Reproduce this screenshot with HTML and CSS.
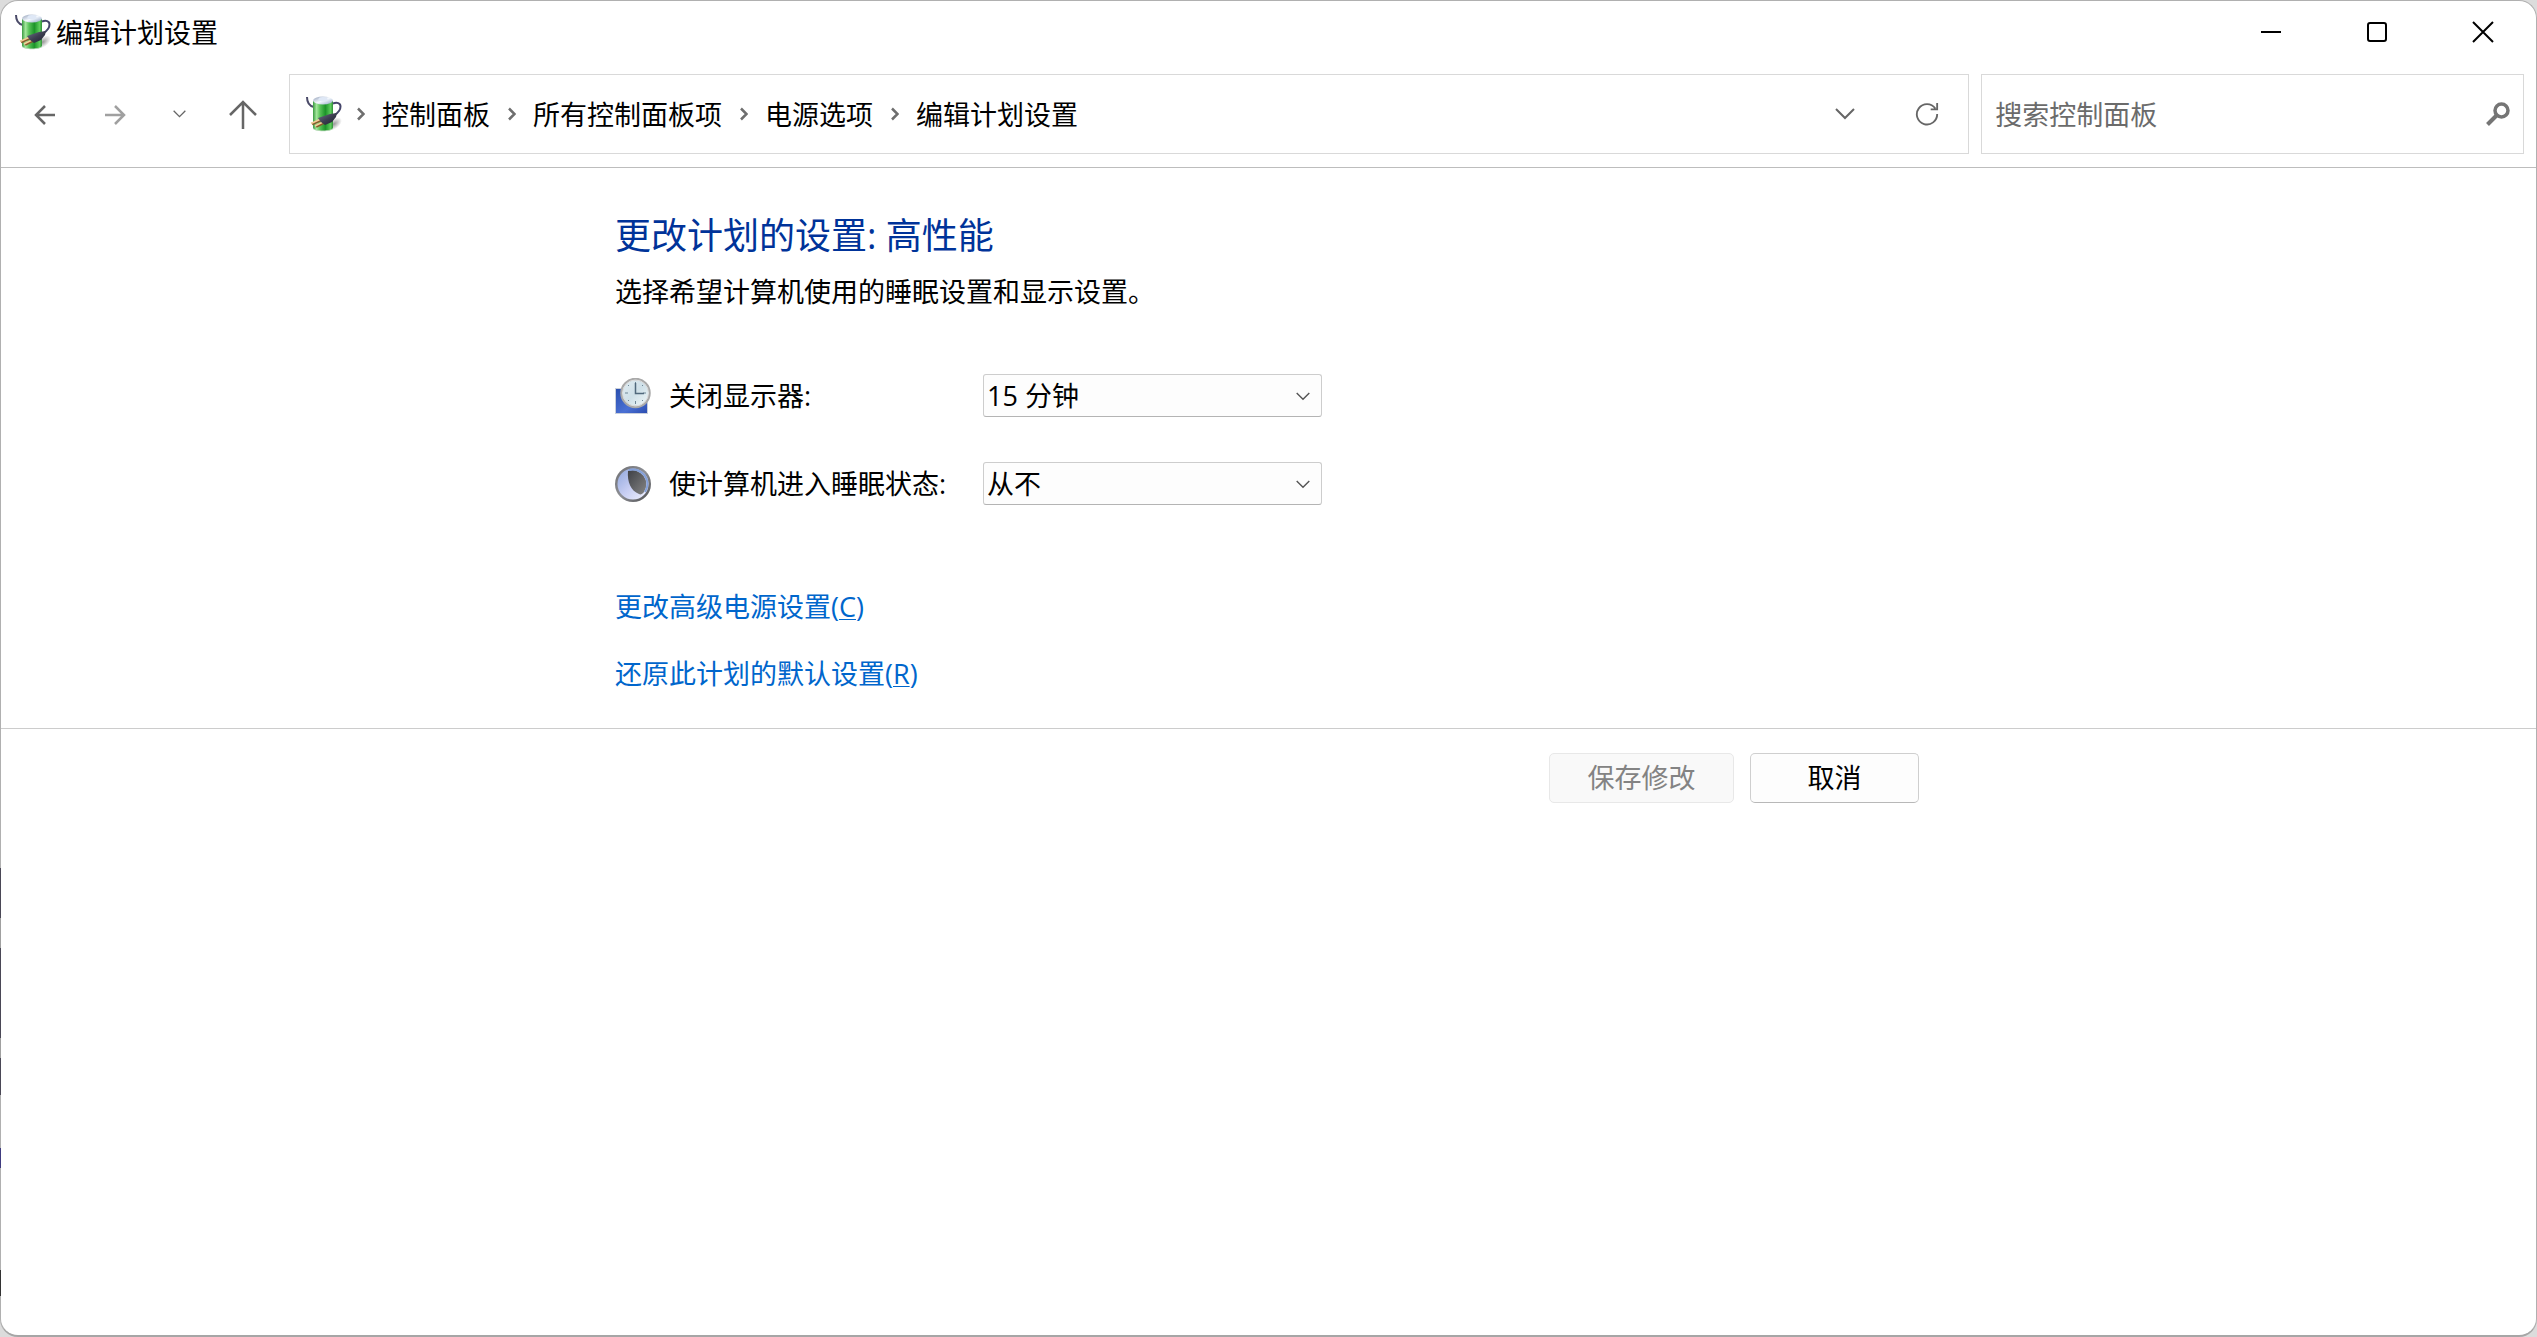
FILE: index.html
```html
<!DOCTYPE html>
<html lang="zh-CN">
<head>
<meta charset="utf-8">
<title>编辑计划设置</title>
<meta name="viewport" content="width=device-width, initial-scale=1">
<link rel="stylesheet" href="styles.css">
</head>
<body>
<svg class="defs" width="0" height="0" aria-hidden="true">
  <defs>
    <linearGradient id="green" x1="0" x2="1" y1="0" y2="0">
      <stop offset="0" stop-color="#3a9a42"/><stop offset=".18" stop-color="#a4e69c"/>
      <stop offset=".35" stop-color="#58c258"/><stop offset=".62" stop-color="#1c9429"/>
      <stop offset=".88" stop-color="#5fce5d"/><stop offset="1" stop-color="#2f8c38"/>
    </linearGradient>
    <linearGradient id="plug" x1="0" x2="1" y1="0" y2="1">
      <stop offset="0" stop-color="#70748a"/><stop offset=".5" stop-color="#3c3e50"/><stop offset="1" stop-color="#1d1e2e"/>
    </linearGradient>
    <linearGradient id="cap" x1="0" x2="1" y1="0" y2="1">
      <stop offset="0" stop-color="#8d9bb5"/><stop offset=".5" stop-color="#f6faff"/><stop offset="1" stop-color="#8aa0c0"/>
    </linearGradient>
    <radialGradient id="shade">
      <stop offset="0" stop-color="#000" stop-opacity=".4"/><stop offset="1" stop-color="#000" stop-opacity="0"/>
    </radialGradient>
    <symbol id="battery" viewBox="0 0 36 36">
      <ellipse cx="28" cy="28" rx="9" ry="5" fill="url(#shade)" transform="rotate(-35 28 28)"/>
      <path d="M1 1c0 5 2 9 7 10" fill="none" stroke="#4a4a68" stroke-width="2"/>
      <path d="M7 5v27c0 4 20 4 20 0V5z" fill="url(#green)"/>
      <path d="M7 31.500c0 4 20 4 20 0v.7c0 4-20 4-20 0z" fill="#b9d8ba"/>
      <ellipse cx="17" cy="4.500" rx="10" ry="4" fill="url(#cap)"/>
      <ellipse cx="17" cy="3.200" rx="4.500" ry="2.200" fill="#dfe8f6"/>
      <path d="M27 7.500c4-1.500 7.500-.5 7.500 3 0 4-2 6-6 8.500" fill="none" stroke="#45456a" stroke-width="2"/>
      <path d="M6 28l10-4.500M10 30.500l9-4.500" stroke="#8a5a2a" stroke-width="3"/>
      <path d="M5 27.500l11-5M9 30l10-5" stroke="#f3cf98" stroke-width="1.500"/>
      <path d="M12 22l12-4 7-1-1 4-4 5-7 3-4-3z" fill="url(#plug)"/>
    </symbol>
    <linearGradient id="screen" x1="0" x2="1" y1="0" y2="1">
      <stop offset="0" stop-color="#2a4fae"/><stop offset=".6" stop-color="#4a70d4"/><stop offset="1" stop-color="#2b4db0"/>
    </linearGradient>
    <linearGradient id="dial" x1="0" x2="1" y1="0" y2="1">
      <stop offset="0" stop-color="#e2edf2"/><stop offset=".5" stop-color="#cfe0e8"/><stop offset="1" stop-color="#f4fafa"/>
    </linearGradient>
    <linearGradient id="ring" x1="0" x2="1" y1="0" y2="1">
      <stop offset="0" stop-color="#6d6d70"/><stop offset=".5" stop-color="#8e9096"/><stop offset="1" stop-color="#4a4a4c"/>
    </linearGradient>
    <linearGradient id="moon" x1="0" x2="1" y1="0" y2="1">
      <stop offset="0" stop-color="#8fa6dc"/><stop offset=".5" stop-color="#c6cdf2"/><stop offset="1" stop-color="#f2f3ff"/>
    </linearGradient>
    <linearGradient id="dark" x1="0" x2="1" y1="0" y2="1">
      <stop offset="0" stop-color="#3e4046"/><stop offset="1" stop-color="#858585"/>
    </linearGradient>
    <symbol id="down" viewBox="0 0 20 12"><path d="M1 1l9 9 9-9" fill="none" stroke="currentColor" stroke-width="2"/></symbol>
    <symbol id="sep" viewBox="0 0 8 14"><path d="M1 1.500L6.500 7 1 12.500" fill="none" stroke="#6e6e6e" stroke-width="2.500"/></symbol>
  </defs>
</svg>

<div class="window">
  <header class="titlebar">
    <svg class="app-icon" aria-hidden="true"><use href="#battery"/></svg>
    <span class="title">编辑计划设置</span>
    <div class="controls">
      <button class="control" type="button" aria-label="最小化"><svg width="22" height="22" viewBox="0 0 22 22"><path d="M1 11h20" stroke="#000" stroke-width="2"/></svg></button>
      <button class="control" type="button" aria-label="最大化"><svg width="22" height="22" viewBox="0 0 22 22"><rect x="2" y="2" width="18" height="18" rx="2" fill="none" stroke="#000" stroke-width="2"/></svg></button>
      <button class="control" type="button" aria-label="关闭"><svg width="22" height="22" viewBox="0 0 22 22"><path d="M1 1l20 20M21 1L1 21" stroke="#000" stroke-width="2"/></svg></button>
    </div>
  </header>

  <nav class="toolbar" aria-label="导航">
    <div class="history">
      <button class="nav-btn" type="button" aria-label="后退"><svg width="22" height="22" viewBox="0 0 22 22"><path d="M21 11H2M11 2l-9 9 9 9" fill="none" stroke="#666" stroke-width="2.500"/></svg></button>
      <button class="nav-btn" type="button" aria-label="前进"><svg width="22" height="22" viewBox="0 0 22 22"><path d="M1 11h19M11 2l9 9-9 9" fill="none" stroke="#a0a0a0" stroke-width="2.500"/></svg></button>
      <button class="nav-btn nav-recent" type="button" aria-label="最近位置"><svg width="13" height="8"><use href="#down"/></svg></button>
      <button class="nav-btn nav-up" type="button" aria-label="上移"><svg width="30" height="30" viewBox="0 0 30 30"><path d="M15 29V2M2 15L15 2l13 13" fill="none" stroke="#666" stroke-width="2.500"/></svg></button>
    </div>
    <div class="address">
      <svg class="app-icon" aria-hidden="true"><use href="#battery"/></svg>
      <ol class="crumbs">
        <li><svg class="sep" aria-hidden="true"><use href="#sep"/></svg><a href="#">控制面板</a></li>
        <li><svg class="sep" aria-hidden="true"><use href="#sep"/></svg><a href="#">所有控制面板项</a></li>
        <li><svg class="sep" aria-hidden="true"><use href="#sep"/></svg><a href="#">电源选项</a></li>
        <li><svg class="sep" aria-hidden="true"><use href="#sep"/></svg><a href="#">编辑计划设置</a></li>
      </ol>
      <button class="addr-btn" type="button" aria-label="以前的位置"><svg width="20" height="12"><use href="#down"/></svg></button>
      <button class="addr-btn" type="button" aria-label="刷新"><svg width="24" height="24" viewBox="0 0 26 26"><path d="M22 7A11 11 0 1 0 24 13M24 1v7h-7" fill="none" stroke="#666" stroke-width="2"/></svg></button>
    </div>
    <div class="search">
      <input class="search-input" type="search" placeholder="搜索控制面板" aria-label="搜索控制面板">
      <button class="search-btn" type="button" aria-label="搜索"><svg width="24" height="24" viewBox="0 0 24 24"><circle cx="15.500" cy="8.500" r="6.500" fill="none" stroke="#757575" stroke-width="3.500"/><path d="M11 13L1.500 22.500" stroke="#757575" stroke-width="4"/></svg></button>
    </div>
  </nav>

  <main>
    <section class="column plan">
      <h1>更改计划的设置: 高性能</h1>
      <p>选择希望计算机使用的睡眠设置和显示设置。</p>
      <div class="settings">
        <div class="setting">
          <svg class="setting-icon" viewBox="0 0 36 36" aria-hidden="true">
            <path d="M0 10h33v26H0z" fill="#c9cfdb"/><path d="M1 11h31v24H1z" fill="url(#screen)"/>
            <circle cx="20.500" cy="15" r="14" fill="url(#dial)" stroke="#a9a9a9" stroke-width="2.500"/>
            <circle cx="20.500" cy="15" r="13" fill="none" stroke="#ddd" stroke-width="1"/>
            <path d="M20.500 4v3M20.500 23v3M10 15h3M28 15h3M13 7l1 1M28 7l-1 1M13 23l1-1M28 23l-1-1" stroke="#6f8797"/>
            <path d="M20.500 5v10.500H29" fill="none" stroke="#51697c" stroke-width="1.500"/>
          </svg>
          <label for="display-off">关闭显示器:</label>
          <span class="select"><select id="display-off"><option>15 分钟</option><option>从不</option></select><svg width="14" height="9" aria-hidden="true"><use href="#down"/></svg></span>
        </div>
        <div class="setting">
          <svg class="setting-icon" viewBox="0 0 36 36" aria-hidden="true">
            <circle cx="18" cy="18" r="18" fill="url(#ring)"/>
            <circle cx="18" cy="18" r="15.500" fill="url(#moon)"/>
            <path d="M13 5a14 14 0 0 1 16 21c-1.500 2-3.500 3-5 2C16 25 12 16 13 5z" fill="url(#dark)"/>
            <path d="M14 4a14.500 14.500 0 0 1 16 22" fill="none" stroke="#84a0d8" stroke-width="2"/>
          </svg>
          <label for="sleep">使计算机进入睡眠状态:</label>
          <span class="select"><select id="sleep"><option>从不</option><option>15 分钟</option></select><svg width="14" height="9" aria-hidden="true"><use href="#down"/></svg></span>
        </div>
      </div>
      <div class="links">
        <a href="#">更改高级电源设置(<u>C</u>)</a>
        <a href="#">还原此计划的默认设置(<u>R</u>)</a>
      </div>
    </section>
    <div class="footer">
      <div class="column actions">
        <button class="btn btn-save" type="button" disabled>保存修改</button>
        <button class="btn" type="button">取消</button>
      </div>
    </div>
  </main>
</div>
</body>
</html>
```

FILE: styles.css
```css
* { box-sizing: border-box; }

body {
  margin: 0;
  background: #dcdcdc;
  color: #000;
  font: 27px/36px "Open Sans", "Noto Sans CJK SC", sans-serif;
}

button, input, select { font: inherit; color: inherit; }
button { padding: 0; border: 0; background: none; }
svg { display: block; flex: none; }
a { color: inherit; text-decoration: none; }
.defs { position: absolute; }

.window {
  position: relative;
  display: flex;
  flex-direction: column;
  min-height: 100vh;
  background: #fff;
  border: 1px solid #b0b0b0;
  border-bottom: 2px solid #a6a6a6;
  border-radius: 18px;
}

/* Slivers of the window behind that show along the left edge */
.window::before {
  content: "";
  position: absolute;
  top: 867px;
  left: -1px;
  width: 1px;
  height: 428px;
  background: linear-gradient(#4a4856 50px, #a0a0a0 50px 80px, #4a4856 80px 170px, #a0a0a0 170px 190px, #4a4856 190px 227px, #b0b0b0 227px 280px, #403c80 280px 300px, #b0b0b0 300px 402px, #333 402px);
}

.app-icon { width: 36px; height: 36px; }

.titlebar {
  display: flex;
  align-items: center;
  height: 61px;
  padding-left: 14px;
}
.title { margin-left: 5px; padding-top: 2px; }
.controls { display: flex; margin-left: auto; }
.control { display: grid; place-items: center; width: 106px; height: 60px; }

.toolbar {
  display: flex;
  gap: 12px;
  padding: 12px 12px 13px 0;
  border-bottom: 1px solid #bdbdbd;
}
.history { display: flex; width: 276px; color: #666; }
.nav-btn { display: grid; place-items: center; width: 70px; padding: 2px 0 0 18px; }
.nav-recent { width: 58px; padding: 0 0 0 18px; }
.nav-up { width: 74px; padding: 2px 0 0 14px; }

.address, .search {
  display: flex;
  align-items: center;
  height: 80px;
  border: 1px solid #d9d9d9;
}
.address { flex: 1678 1 0; padding: 0 0 0 16px; }
.search { flex: 546 1 0; }
.crumbs { display: flex; margin: 0 auto 0 15px; padding: 0; list-style: none; }
.crumbs li { display: flex; align-items: center; }
.crumbs a { padding-top: 2px; }
.crumbs li + li { padding-left: 18px; }
.sep { width: 8px; height: 14px; margin-right: 17px; }
.addr-btn { display: grid; place-items: center; width: 82px; height: 78px; color: #666; }

.search-input {
  flex: 1;
  min-width: 0;
  padding: 2px 0 0 13px;
  border: 0;
  outline: 0;
  background: none;
}
.search-input::placeholder { color: #6b6b6b; opacity: 1; }
.search-btn { display: grid; place-items: center; width: 50px; height: 78px; }

.column { width: 100%; max-width: 1307px; margin: 0 auto; padding-right: 3px; }
.plan { padding-top: 44px; padding-bottom: 36px; }
h1 { margin: 0; color: #039; font-size: 36px; line-height: 48px; font-weight: 400; }
p { margin: 14px 0 0; }

.settings { display: grid; gap: 45px; margin-top: 64px; }
.setting { display: grid; grid-template-columns: 54px 314px 339px; align-items: center; }
.setting-icon { width: 36px; height: 36px; }
.select { position: relative; }
.select svg { position: absolute; top: 18px; right: 12px; color: #555; pointer-events: none; }
select {
  display: block;
  width: 100%;
  height: 43px;
  padding: 0 32px 0 3px;
  appearance: none;
  border: 1px solid #cdcdcd;
  border-bottom-color: #b4b4b4;
  border-radius: 3px;
  background: #fdfdfd;
}

.links { display: grid; justify-items: start; gap: 31px; margin-top: 84px; color: #06c; }
u { text-underline-offset: 2px; text-decoration-thickness: 1px; }

.footer { border-top: 1px solid #ccc; }
.actions { display: flex; justify-content: flex-end; gap: 16px; padding-top: 24px; }
.btn {
  width: 169px;
  height: 50px;
  border: 1px solid #cfcfcf;
  border-bottom-color: #b8b8b8;
  border-radius: 5px;
  background: #fdfdfd;
}
.btn-save { width: 185px; border-color: #e8e8e8; background: #f9f9f9; color: #838383; }
```
